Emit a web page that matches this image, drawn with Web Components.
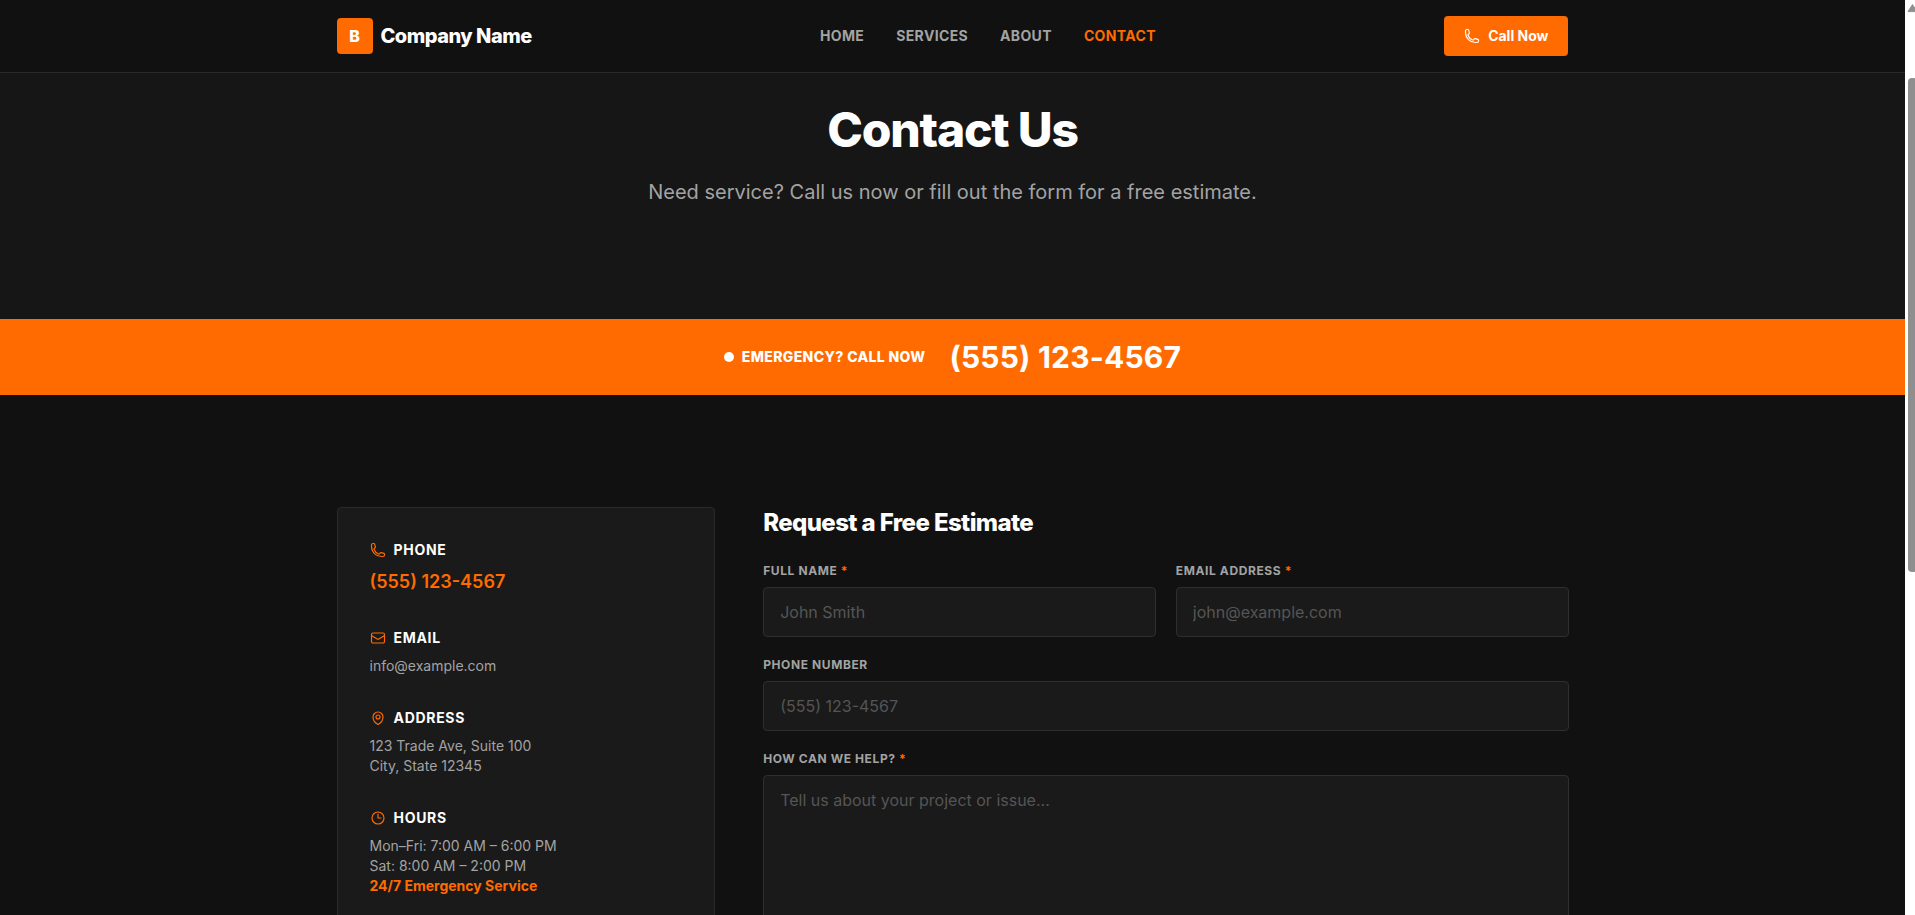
<!DOCTYPE html>
<html lang="en">
<head>
<meta charset="utf-8">
<title>Contact Us</title>
<style>
  html, body { margin: 0; height: 100%; overflow: hidden; background: #111; }
  body { font-family: Inter, "Liberation Sans", sans-serif; color: #fff; }
</style>
</head>
<body>
<app-shell>
  <site-header active="contact"></site-header>
  <page-hero heading="Contact Us" sub="Need service? Call us now or fill out the form for a free estimate."></page-hero>
  <emergency-bar phone="(555) 123-4567"></emergency-bar>
  <contact-section>
    <contact-card slot="aside">
      <info-item icon="phone" label="Phone"><span style="display:block;color:#ff6b00;font-size:18px;line-height:28px;font-weight:600">(555) 123-4567</span></info-item>
      <info-item icon="mail" label="Email">info@example.com</info-item>
      <info-item icon="pin" label="Address">123 Trade Ave, Suite 100<br>City, State 12345</info-item>
      <info-item icon="clock" label="Hours">Mon–Fri: 7:00 AM – 6:00 PM<br>Sat: 8:00 AM – 2:00 PM<br><span style="color:#ff6b00;font-weight:700">24/7 Emergency Service</span></info-item>
    </contact-card>
    <estimate-form slot="main"></estimate-form>
  </contact-section>
</app-shell>

<script>
const ICONS = {
  phone: '<path d="M2.25 6.75c0 8.284 6.716 15 15 15h2.25a2.25 2.25 0 0 0 2.25-2.25v-1.372c0-.516-.351-.966-.852-1.091l-4.423-1.106c-.44-.11-.902.055-1.173.417l-.97 1.293c-.282.376-.769.542-1.21.38a12.035 12.035 0 0 1-7.143-7.143c-.162-.441.004-.928.38-1.21l1.293-.97c.363-.271.527-.734.417-1.173L6.963 3.102a1.125 1.125 0 0 0-1.091-.852H4.5A2.25 2.25 0 0 0 2.25 4.5v2.25Z"/>',
  mail: '<path d="M21.75 6.75v10.5a2.25 2.25 0 0 1-2.25 2.25h-15a2.25 2.25 0 0 1-2.25-2.25V6.75m19.5 0A2.25 2.25 0 0 0 19.5 4.5h-15a2.25 2.25 0 0 0-2.25 2.25m19.5 0v.243a2.25 2.25 0 0 1-1.07 1.916l-7.5 4.615a2.25 2.25 0 0 1-2.36 0L3.32 8.91a2.25 2.25 0 0 1-1.07-1.916V6.75"/>',
  pin: '<path d="M15 10.5a3 3 0 1 1-6 0 3 3 0 0 1 6 0Z"/><path d="M19.5 10.5c0 7.142-7.5 11.25-7.5 11.25S4.5 17.642 4.5 10.5a7.5 7.5 0 1 1 15 0Z"/>',
  clock: '<path d="M12 6v6h4.5m4.5 0a9 9 0 1 1-18 0 9 9 0 0 1 18 0Z"/>'
};
function define(name, css, html) {
  customElements.define(name, class extends HTMLElement {
    connectedCallback() {
      if (this.shadowRoot) return;
      const root = this.attachShadow({ mode: 'open' });
      const body = typeof html === 'function' ? html(this) : html;
      root.innerHTML = `<style>${css}</style>${body}`;
    }
  });
}
const wrap = `max-width:1280px;margin:0 auto;padding:0 24px;box-sizing:border-box;`;
const muted = '#a3a3a3';

define('app-icon', `:host{display:inline-flex;width:16px;height:16px;flex:none}svg{width:100%;height:100%;display:block}`,
  h => `<svg viewBox="0 0 24 24" fill="none" stroke="currentColor" stroke-width="1.75" stroke-linecap="round" stroke-linejoin="round">${ICONS[h.getAttribute('name')]}</svg>`);

define('fake-scrollbar', `
  :host{display:block;width:10px;flex:none;height:100%;overflow:hidden;background:#fff}
  .inner{width:15px;height:100%;display:flex;flex-direction:column;align-items:center}
  svg{width:15px;height:15px;display:block;flex:none}
  .thumb{width:9px;height:494px;margin-top:63px;background:#8f8f8f;border-radius:4px;flex:none}
`, `<div class="inner"><svg viewBox="0 0 15 15"><path d="M7.5 4.6 L12 11.6 H3 Z" fill="#8f8f8f" stroke="#8f8f8f" stroke-linejoin="round"/></svg><div class="thumb"></div></div>`);

define('app-shell', `
  :host{display:flex;height:100vh;width:100%;overflow:hidden}
  .col{flex:1;min-width:0;height:100%;overflow:hidden;background:#111}
`, `<div class="col"><slot></slot></div><fake-scrollbar></fake-scrollbar>`);

define('site-header', `
  :host{display:block;background:#111;border-bottom:1px solid #2a2a2a}
  .bar{${wrap}height:72px;display:flex;align-items:center;justify-content:space-between}
  .brand{display:flex;align-items:center;gap:8px;font-size:20px;line-height:28px;font-weight:800;letter-spacing:-.5px;color:#fff}
  .logo{width:36px;height:36px;border-radius:4px;background:#ff6b00;display:flex;align-items:center;justify-content:center;font-size:16px;font-weight:800;letter-spacing:0}
  nav{display:flex;gap:32px}
  a{color:${muted};font-size:14px;line-height:20px;font-weight:700;letter-spacing:.35px;text-transform:uppercase;text-decoration:none}
  a.on{color:#ff6b00}
`, `<div class="bar">
  <div class="brand"><span class="logo">B</span><span>Company Name</span></div>
  <nav><a href="#">Home</a><a href="#">Services</a><a href="#">About</a><a href="#" class="on">Contact</a></nav>
  <call-button></call-button>
</div>`);

define('call-button', `
  :host{display:inline-flex;align-items:center;gap:8px;height:40px;padding:0 20px;background:#ff6b00;border-radius:4px;color:#fff;font-size:14px;line-height:20px;font-weight:700;box-sizing:border-box}
`, `<app-icon name="phone"></app-icon><span>Call Now</span>`);

define('page-hero', `
  :host{display:block;background:#161616;padding:33px 0 113px;text-align:center}
  h1{margin:0 0 24px;font-size:48px;line-height:48px;font-weight:800;letter-spacing:-1.2px;color:#fff}
  p{margin:0;font-size:20px;line-height:28px;color:${muted}}
`, h => `<h1>${h.getAttribute('heading')}</h1><p>${h.getAttribute('sub')}</p>`);

define('emergency-bar', `
  :host{display:flex;height:76px;align-items:center;justify-content:center;gap:24px;background:#ff6b00;color:#fff}
  .l{display:flex;align-items:center;gap:8px;font-size:14px;line-height:20px;font-weight:800;letter-spacing:.35px;text-transform:uppercase}
  .dot{width:10px;height:10px;border-radius:50%;background:#fff;flex:none}
  .p{font-size:30px;line-height:36px;font-weight:700;letter-spacing:.2px}
`, h => `<div class="l"><span class="dot"></span><span>Emergency? Call Now</span></div><div class="p">${h.getAttribute('phone')}</div>`);

define('contact-section', `
  :host{display:block;background:#111;padding-top:112px}
  .grid{${wrap}display:grid;grid-template-columns:repeat(3,1fr);gap:48px;align-items:start}
  .main{grid-column:span 2;min-width:0}
`, `<div class="grid"><div><slot name="aside"></slot></div><div class="main"><slot name="main"></slot></div></div>`);

define('contact-card', `
  :host{display:flex;flex-direction:column;gap:32px;background:#1a1a1a;border:1px solid #2a2a2a;border-radius:4px;padding:32px}
`, `<slot></slot>`);

define('info-item', `
  :host{display:block;font-size:14px;line-height:20px;color:${muted}}
  .h{display:flex;align-items:center;gap:8px;margin-bottom:8px;font-weight:700;letter-spacing:.7px;text-transform:uppercase;color:#fff}
  app-icon{color:#ff6b00}
`, h => `<div class="h"><app-icon name="${h.getAttribute('icon')}"></app-icon><span>${h.getAttribute('label')}</span></div><slot></slot>`);

define('form-field', `
  :host{display:block;min-width:0}
  label{display:block;margin-bottom:8px;font-size:12px;line-height:16px;font-weight:700;letter-spacing:.6px;text-transform:uppercase;color:${muted}}
  b{color:#ff6b00;font-weight:700}
  input,textarea{display:block;width:100%;box-sizing:border-box;background:#1a1a1a;border:1px solid #2e2e2e;border-radius:4px;padding:12px 16px;color:#fff;font:400 16px/24px Inter,"Liberation Sans",sans-serif;outline:none;resize:none;margin:0}
  textarea{height:220px}
  ::placeholder{color:#555;opacity:1}
`, h => {
  const req = h.hasAttribute('required') ? ' <b>*</b>' : '';
  const ph = h.getAttribute('placeholder');
  const ctl = h.getAttribute('type') === 'area'
    ? `<textarea placeholder="${ph}"></textarea>`
    : `<input placeholder="${ph}">`;
  return `<label>${h.getAttribute('label')}${req}</label>${ctl}`;
});

define('estimate-form', `
  :host{display:block}
  h2{margin:0 0 24px;font-size:24px;line-height:32px;font-weight:800;letter-spacing:-.6px;color:#fff}
  form{display:flex;flex-direction:column;gap:20px}
  .row{display:grid;grid-template-columns:1fr 1fr;gap:20px}
`, `<h2>Request a Free Estimate</h2><form>
  <div class="row">
    <form-field label="Full Name" required placeholder="John Smith"></form-field>
    <form-field label="Email Address" required placeholder="john@example.com"></form-field>
  </div>
  <form-field label="Phone Number" placeholder="(555) 123-4567"></form-field>
  <form-field label="How can we help?" required type="area" placeholder="Tell us about your project or issue..."></form-field>
</form>`);
</script>
</body>
</html>
